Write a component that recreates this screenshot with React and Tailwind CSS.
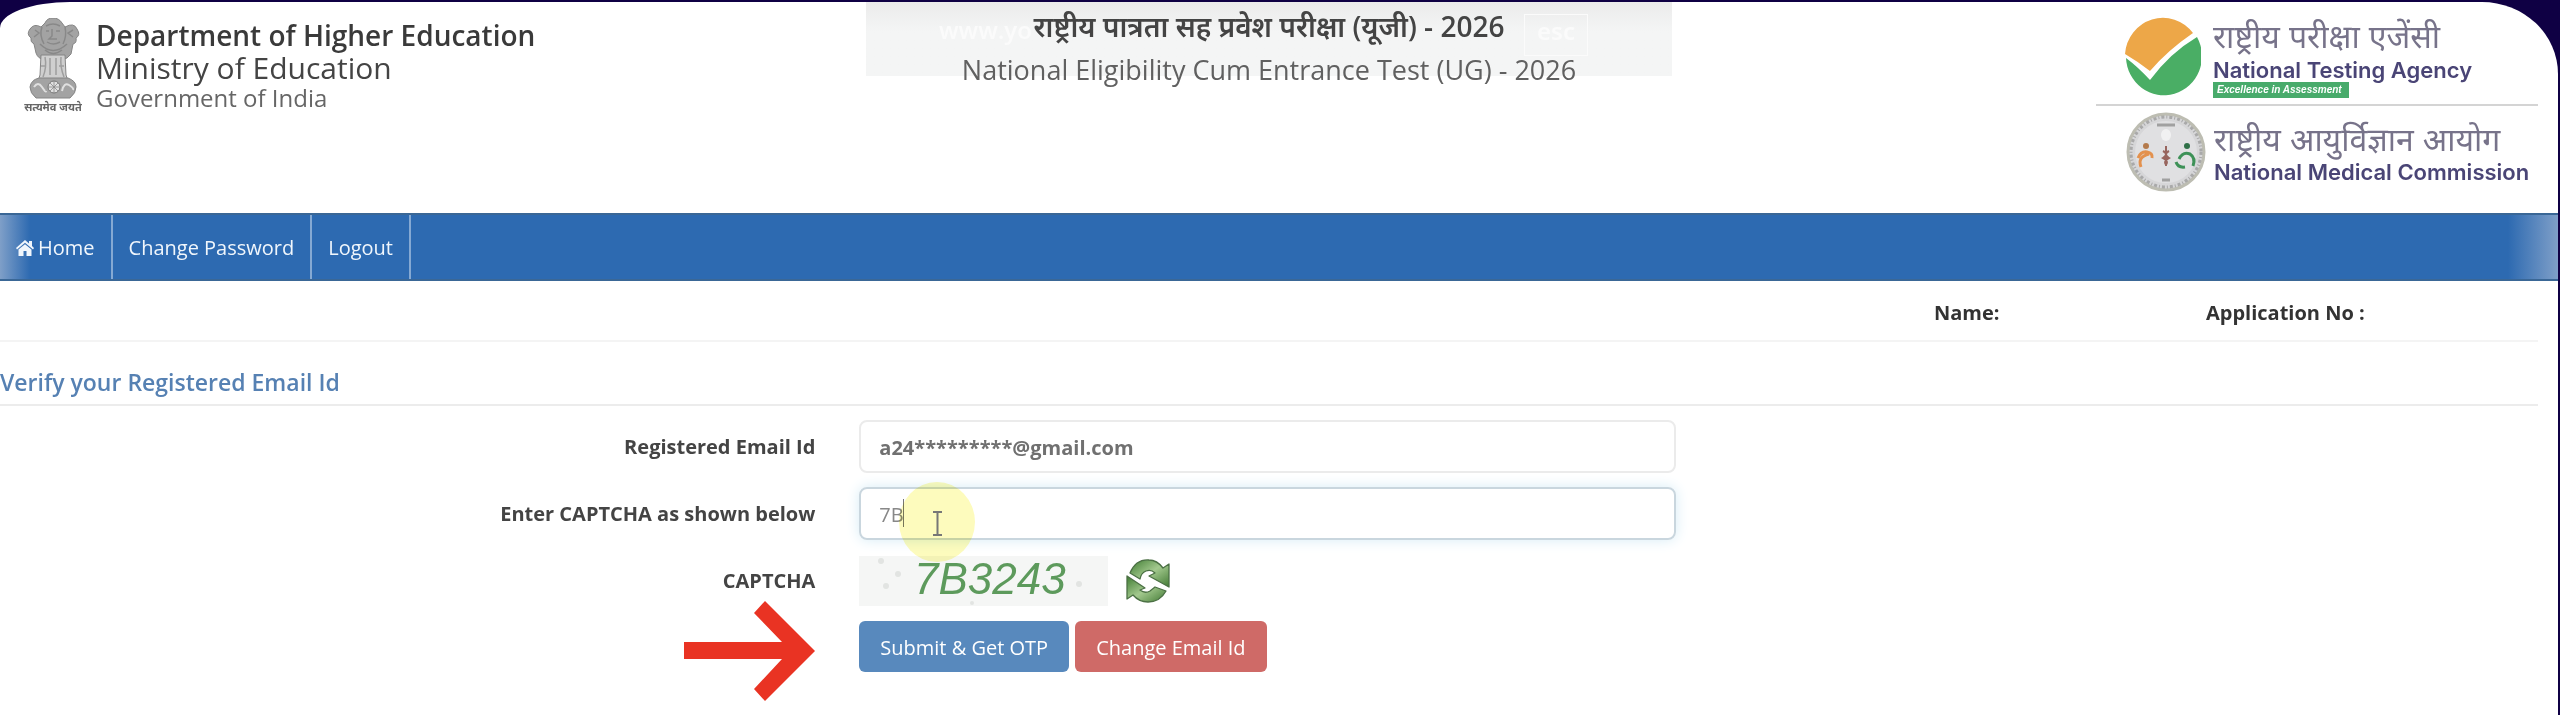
import { useState } from 'react'

function Emblem() {
  return (
    <svg viewBox="0 0 58 96" className="w-[58px] h-24 shrink-0" aria-label="Emblem of India">
      <g fill="#a3a3a3" stroke="#858585" strokeWidth="1">
        <path d="M21 5q2-5 8-5t9 5l3 4q9-5 12 2 4 6-1 9 1 5-3 6l-2 10q-3 5-10 6H21q-7-1-9-7l-2-9q-4-2-3-6-5-4-1-9 4-6 11-2z" />
        <path d="M17 37h24l1 20 2 6H14l2-6z" fill="#cfcfcf" />
        <path d="M15 60h29q8 3 8 9 0 6-6 11H12q-6-5-6-11 1-7 9-9z" />
      </g>
      <g fill="none" stroke="#6f6f6f" strokeWidth="1.5" opacity=".5">
        <path d="M22 8q7-4 14 0M22 13h3m7 0h4M28 11v7l-3 3h8M23 24q6 4 13 0M11 12l4 3-5 4m39-7-5 3 5 4M18 9q-3 8 2 17M41 9q2 9-2 17M16 26q13 13 27 0M21 32q8 7 17 0" />
        <path d="M21 39q2 10-2 20M26 40v17M32 40v17M37 39q-1 10 3 20M17 48h5m13 0h5" />
      </g>
      <circle cx="30" cy="69" r="6" fill="#e0e0e0" stroke="#777" />
      <path d="M30 63v12M24 69h12M26 65l8 8m0-8-8 8" stroke="#888" strokeWidth=".8" />
      <path d="M10 69q4-6 8 0t4 4M38 73q2-9 7-6t4 5" fill="none" stroke="#e0e0e0" strokeWidth="2" />
      <text x="29" y="93" textAnchor="middle" fontSize="11" fontWeight="700" fill="#666" fontFamily="'Noto Sans', 'Noto Sans Devanagari', sans-serif">सत्यमेव जयते</text>
    </svg>
  )
}

function NtaLogo() {
  return (
    <svg viewBox="0 0 76 80" className="w-[76px] h-20 shrink-0" aria-hidden="true">
      <path d="M0 38A38 39 0 0 1 68 17Q43 34 25 55Q12 45 0 38z" fill="#eda748" />
      <path d="M1 42Q13 51 25 64Q45 37 72 21A38 39 0 1 1 1 42z" fill="#4aae65" />
    </svg>
  )
}

function NmcLogo() {
  return (
    <svg viewBox="0 0 80 80" className="w-20 h-20 shrink-0" aria-hidden="true">
      <circle cx="40" cy="40" r="38" fill="#d6d6d8" stroke="#bdbdb2" strokeWidth="3" />
      <circle cx="40" cy="40" r="35" fill="none" stroke="#8b8b8b" strokeWidth="3" strokeDasharray="3 2 1 2" opacity=".6" />
      <circle cx="40" cy="40" r="31" fill="#e0e0e2" />
      <path d="M31 13h18M36 68h8" stroke="#a0a0a0" strokeWidth="3" />
      <ellipse cx="40" cy="23" rx="5" ry="6" fill="#f1f1f2" />
      <circle cx="20" cy="34" r="3" fill="#b47a4b" />
      <path d="M12 46q3-7 9-6 6 1 5 6M15 55q-4-10 8-13" fill="none" stroke="#e3914e" strokeWidth="3" />
      <circle cx="61" cy="34" r="3" fill="#2f7047" />
      <path d="M53 47q4-8 11-5 6 4 3 12M50 50q2 6 9 5" fill="none" stroke="#3d9157" strokeWidth="3" />
      <path d="M40 34v20M37 39q6 3 0 7 6 3 3 7M43 39q-6 3 0 7-6 3-3 7" fill="none" stroke="#98655e" strokeWidth="2" />
    </svg>
  )
}

function HomeIcon() {
  return (
    <svg viewBox="0 0 18 16" className="w-[18px] h-4" fill="currentColor" aria-hidden="true">
      <path d="M9 0l4 3.500V1h3v5l2 2-1 1.500L9 2.800 1 9.500 0 8z" />
      <path d="M9 4.300l6.500 5.300V16h-5v-5h-3v5h-5V9.600z" />
    </svg>
  )
}

function RefreshIcon() {
  return (
    <svg viewBox="0 0 44 44" className="w-11 h-11" aria-hidden="true">
      <defs>
        <linearGradient id="leaf" x1="0" y1="0" x2="1" y2="1">
          <stop offset="0" stopColor="#3f7c32" />
          <stop offset=".5" stopColor="#a3c98e" />
          <stop offset="1" stopColor="#427a34" />
        </linearGradient>
      </defs>
      <g fill="url(#leaf)" stroke="#4b7044" strokeWidth="1.3" strokeLinejoin="round">
        <path d="M4 14Q10 0 23 1q8 0 14 8l6-4v23L23 17l6-3q-4-4-9-2-5 2-6 8z" />
        <path d="M1 17l18 12-5 2q5 4 10 1l5-4 11 4Q34 43 22 43 13 43 7 36l-6 4z" />
      </g>
    </svg>
  )
}

function Captcha({ code }) {
  return (
    <svg viewBox="0 0 249 50" className="w-[249px] h-[50px]" role="img" aria-label="CAPTCHA image">
      <rect width="249" height="50" fill="#f5f6f5" />
      <g fill="#e2e4e2">
        <circle cx="22" cy="5" r="3" />
        <circle cx="39" cy="18" r="3" />
        <circle cx="27" cy="30" r="3" />
        <circle cx="220" cy="28" r="3" />
        <circle cx="113" cy="47" r="2" />
      </g>
      <text x="55" y="38" fontSize="44" fontStyle="italic" fill="#5d9a5c" fontFamily="'Liberation Sans', sans-serif">{code}</text>
    </svg>
  )
}

const NAV = [
  { label: 'Home', icon: true },
  { label: 'Change Password' },
  { label: 'Logout' },
]

const LABEL = 'text-right text-xl leading-[53px] font-bold text-[#444]'
const ROW = 'h-[51px] grid grid-cols-[816fr_817fr_839fr] gap-x-11'

export default function App() {
  const [captcha, setCaptcha] = useState('7B')

  return (
    <div className="min-h-screen flex flex-col bg-[#0f0044] pt-[2px] pr-[2px] font-['Open_Sans','Noto_Sans',sans-serif]">
      <div className="grow bg-white rounded-tl-[70px_26px] rounded-tr-[76px_72px] overflow-hidden">

        {/* Header */}
        <header className="h-[211px] pr-5 grid grid-cols-[1fr_806px_1fr] items-start">
          <div className="flex gap-[14px] pl-6 pt-4 text-[#444]">
            <Emblem />
            <div>
              <p className="text-[28px] leading-[34px] font-semibold text-[#3a3a3a]">Department of Higher Education</p>
              <p className="text-[30px] leading-8">Ministry of Education</p>
              <p className="text-2xl leading-7 text-[#666]">Government of India</p>
            </div>
          </div>

          <div className="relative h-[74px] bg-linear-to-b from-[#ebebeb] to-[#f4f5f5] to-40% text-center">
            <span className="absolute left-[73px] top-3 text-2xl font-semibold text-[#fbfbfb]" aria-hidden="true">www.yo</span>
            <kbd className="absolute right-[84px] top-3 px-3 pb-2 border border-[#fbfbfb] font-sans text-2xl font-semibold text-[#fbfbfb]" aria-hidden="true">esc</kbd>
            <h1 className="relative pt-1 text-[28px] leading-10 font-semibold text-[#444]">राष्ट्रीय पात्रता सह प्रवेश परीक्षा (यूजी) - 2026</h1>
            <h2 className="relative text-[27px] leading-[48px] text-[#606060]">National Eligibility Cum Entrance Test (UG) - 2026</h2>
          </div>

          <div className="justify-self-end w-[442px] text-[#4a4576] font-[Inter,'Noto_Sans',sans-serif]">
            <div className="flex gap-3 pl-[29px] pt-[14px] border-b-2 border-[#d4d4d4]">
              <NtaLogo />
              <div className="pb-[6px]">
                <p className="text-[32px] leading-[42px] text-[#77738a]">राष्ट्रीय परीक्षा एजेंसी</p>
                <p className="text-[22px] leading-6 font-semibold">National Testing Agency</p>
                <p className="w-[136px] pl-1 bg-[#48ab6b] font-['Liberation_Sans'] text-[10px] leading-4 font-bold italic text-white whitespace-nowrap">Excellence in Assessment</p>
              </div>
            </div>
            <div className="flex gap-2 pl-[30px] pt-[6px]">
              <NmcLogo />
              <div className="pt-2">
                <p className="text-[32px] leading-10 text-[#77738a] whitespace-nowrap">राष्ट्रीय आयुर्विज्ञान आयोग</p>
                <p className="text-[22px] leading-6 font-semibold whitespace-nowrap">National Medical Commission</p>
              </div>
            </div>
          </div>
        </header>

        {/* Menu bar */}
        <nav className="h-[68px] flex border-y-2 border-[#3a6796] bg-[linear-gradient(90deg,#7f9fc8,#2d6ab1_30px,#2d6ab1_calc(100%-50px),#7f9fc8)]">
          {NAV.map((item) => (
            <a
              key={item.label}
              href="#"
              className="flex items-center gap-1 pt-[2px] px-4 border-r-2 border-[#85a9d3] text-xl text-[#f0f6fc]"
            >
              {item.icon && <HomeIcon />}
              {item.label}
            </a>
          ))}
        </nav>

        {/* Candidate details */}
        <div className="mr-5 h-[61px] grid grid-cols-[1934fr_272fr_332fr] border-b-2 border-[#f4f4f4] text-xl leading-[64px] font-bold text-[#333]">
          <p className="col-start-2">Name:</p>
          <p>Application No :</p>
        </div>

        <h3 className="mr-5 h-16 pt-5 border-b-2 border-[#ececec] text-[23px] leading-10 font-semibold text-[#5681b3]">
          Verify your Registered Email Id
        </h3>

        {/* Form */}
        <form className="pt-[14px] flex flex-col gap-4" onSubmit={(e) => e.preventDefault()}>
          <div className={ROW}>
            <label htmlFor="email" className={LABEL}>Registered Email Id</label>
            <input
              id="email"
              readOnly
              value="a24*********@gmail.com"
              className="px-[18px] pt-[2px] border-2 border-[#ebebeb] rounded-lg text-xl font-bold text-[#707070] outline-none"
            />
          </div>

          <div className={ROW}>
            <label htmlFor="captcha" className={LABEL}>Enter CAPTCHA as shown below</label>
            <div className="relative">
              <input
                id="captcha"
                value={captcha}
                onChange={(e) => setCaptcha(e.target.value)}
                className="w-full h-full px-[18px] pt-[2px] border-2 border-[#c9d6de] rounded-lg text-xl text-[#888] outline-none shadow-[0_0_14px_#d6ecf6]"
              />
              {/* text caret and highlighted pointer */}
              <span className="absolute left-11 top-3 w-px h-7 bg-[#777]" />
              <svg viewBox="0 0 78 82" className="absolute left-[39px] -top-[6px] z-10 w-[78px] h-[82px] pointer-events-none mix-blend-multiply" aria-hidden="true">
                <ellipse cx="39" cy="41" rx="38" ry="40" fill="#fdfbbd" />
                <path d="M35 31h9M35 54h9M39.500 31v23" stroke="#777" strokeWidth="2" />
              </svg>
            </div>
          </div>

          <div className={ROW}>
            <span className={LABEL}>CAPTCHA</span>
            <div className="flex items-center gap-[18px]">
              <Captcha code="7B3243" />
              <button type="button" aria-label="Refresh CAPTCHA">
                <RefreshIcon />
              </button>
            </div>
          </div>

          <div className={ROW}>
            <svg viewBox="0 0 131 100" className="-mt-5 justify-self-end w-[131px] h-[100px]" aria-hidden="true">
              <path d="M0 41H98L70 12 81 0 131 50 81 100 70 88 98 58H0z" fill="#e93323" />
            </svg>
            <div className="flex items-start gap-[6px] text-xl text-white">
              <button type="submit" className="h-[51px] px-[21px] pt-[2px] rounded-md bg-[#5889bd]">Submit &amp; Get OTP</button>
              <button type="button" className="h-[51px] px-[21px] pt-[2px] rounded-md bg-[#cf6a67]">Change Email Id</button>
            </div>
          </div>
        </form>
      </div>
    </div>
  )
}
